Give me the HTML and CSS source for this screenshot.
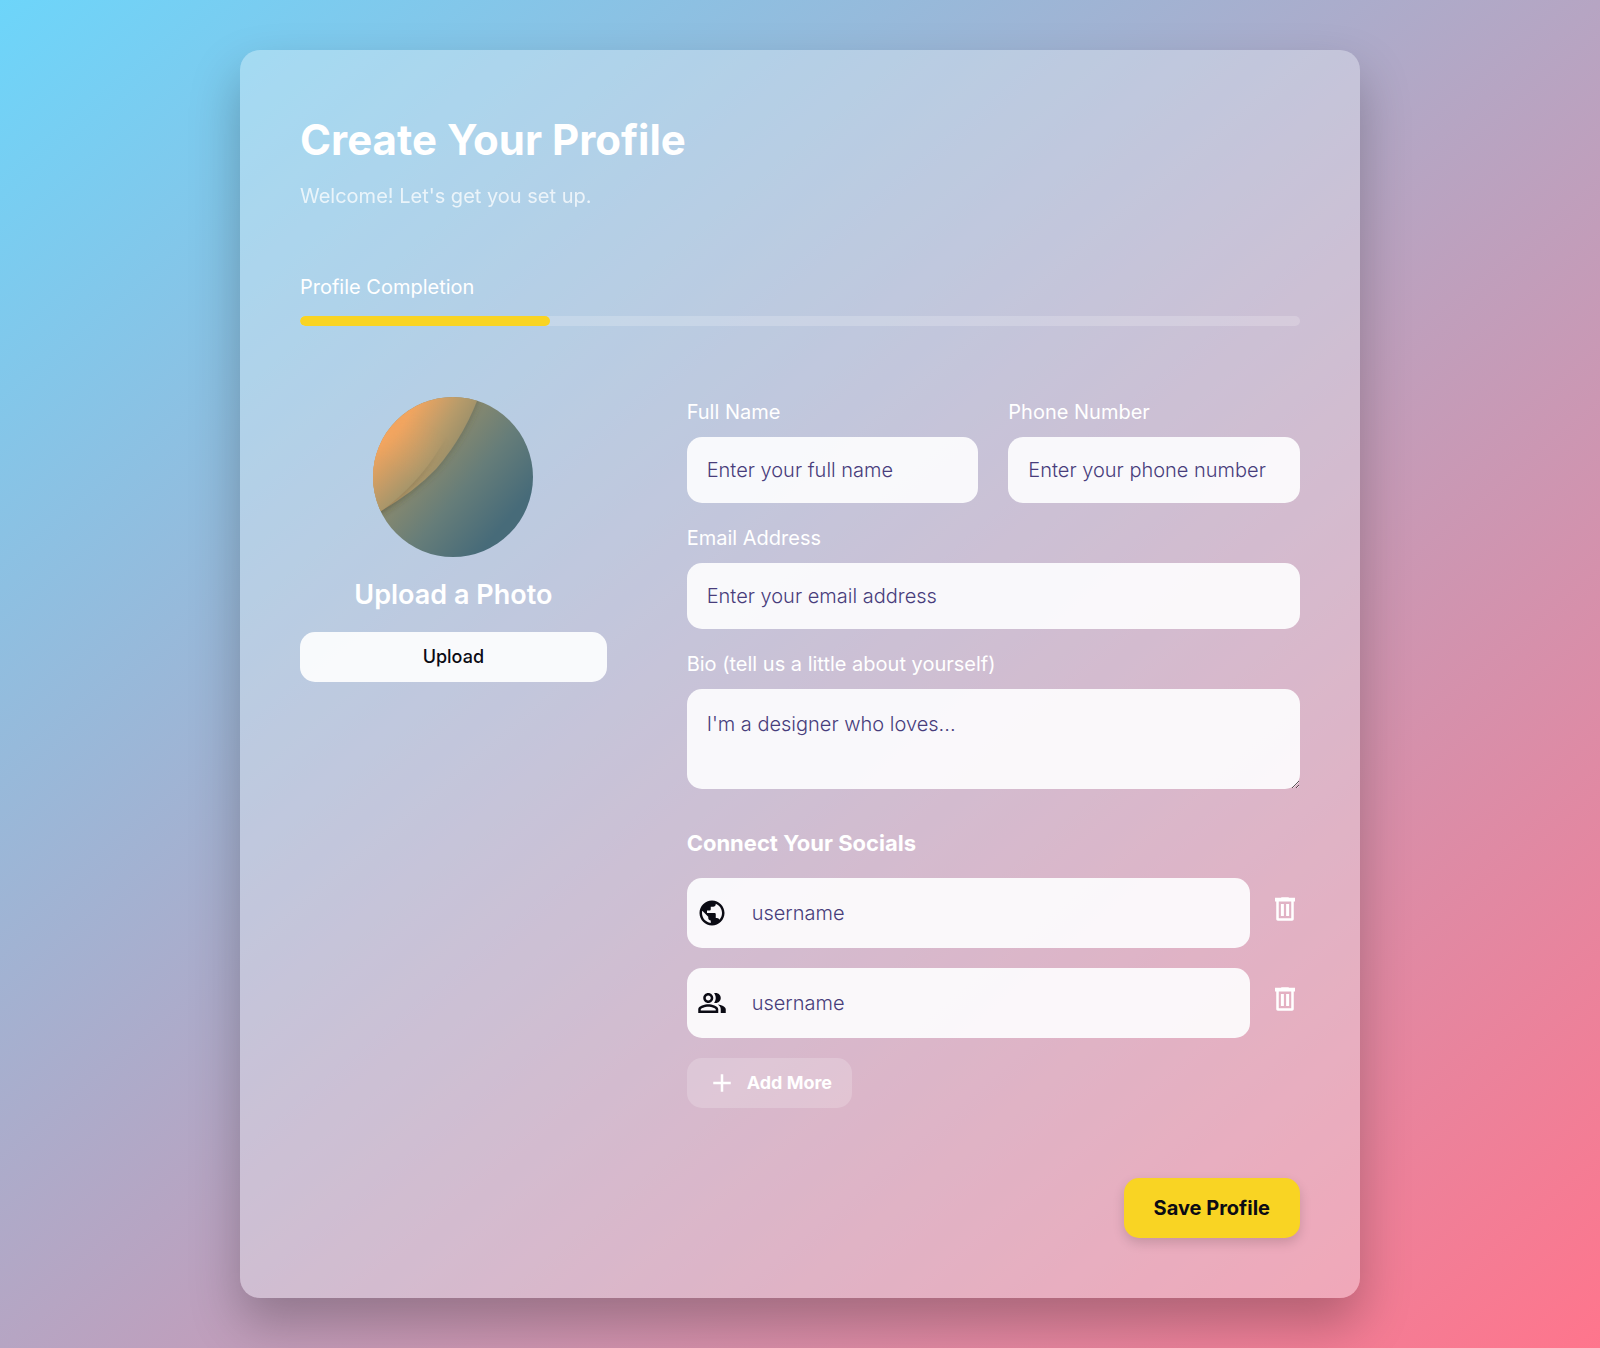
FILE: index.html
```html
<!DOCTYPE html>
<html lang="en">
<head>
<meta charset="utf-8">
<meta name="viewport" content="width=device-width, initial-scale=1">
<title>Create Your Profile</title>
<link rel="stylesheet" href="styles.css">
</head>
<body>
<main class="card">
  <header class="card-header">
    <h1 class="title">Create Your Profile</h1>
    <p class="subtitle">Welcome! Let's get you set up.</p>
  </header>

  <section class="completion">
    <span class="label" id="completion-label">Profile Completion</span>
    <div class="progress" role="progressbar" aria-labelledby="completion-label" aria-valuenow="25" aria-valuemin="0" aria-valuemax="100">
      <div class="progress-fill" style="width: 25%"></div>
    </div>
  </section>

  <form class="profile-form">
    <div class="columns">
      <section class="photo">
        <svg class="avatar" viewBox="0 0 160 160" aria-hidden="true">
          <defs>
            <linearGradient id="base" gradientUnits="userSpaceOnUse" x1="48" y1="58" x2="130" y2="128">
              <stop offset="0" stop-color="#8d8b6d"/>
              <stop offset=".5" stop-color="#667d79"/>
              <stop offset="1" stop-color="#476b79"/>
            </linearGradient>
            <linearGradient id="upper" gradientUnits="userSpaceOnUse" x1="32" y1="24" x2="82" y2="56">
              <stop offset="0" stop-color="#f0a561"/>
              <stop offset=".6" stop-color="#b79b6a"/>
              <stop offset="1" stop-color="#998f6b"/>
            </linearGradient>
            <linearGradient id="lower" gradientUnits="userSpaceOnUse" x1="18" y1="36" x2="55" y2="76">
              <stop offset="0" stop-color="#f4a55f"/>
              <stop offset="1" stop-color="#a3956b"/>
            </linearGradient>
            <linearGradient id="fade" gradientUnits="userSpaceOnUse" x1="40" y1="86" x2="76" y2="42">
              <stop offset="0" stop-color="#fff"/>
              <stop offset="1" stop-color="#fff" stop-opacity="0"/>
            </linearGradient>
            <mask id="lower-mask"><rect x="-20" y="-20" width="200" height="200" fill="url(#fade)"/></mask>
            <filter id="crease" x="-20%" y="-20%" width="140%" height="140%">
              <feDropShadow dx="1" dy="1" stdDeviation="3" flood-color="#4b4a35" flood-opacity=".35"/>
            </filter>
            <clipPath id="round"><circle cx="80" cy="80" r="80"/></clipPath>
          </defs>
          <g clip-path="url(#round)">
            <rect width="160" height="160" fill="url(#base)"/>
            <path d="M-10-10H109Q94 36 63 72Q42 94 8 114L-10 124Z" fill="url(#upper)" filter="url(#crease)"/>
            <g mask="url(#lower-mask)">
              <path d="M-10-10H96Q84 26 66 52Q44 88 8 114L-10 126Z" fill="url(#lower)" filter="url(#crease)"/>
            </g>
          </g>
        </svg>
        <h2 class="photo-title">Upload a Photo</h2>
        <button class="btn btn-upload" type="button">Upload</button>
      </section>

      <div class="fields">
        <div class="field-row">
          <div class="field">
            <label class="label" for="full-name">Full Name</label>
            <input class="input" id="full-name" type="text" placeholder="Enter your full name">
          </div>
          <div class="field">
            <label class="label" for="phone">Phone Number</label>
            <input class="input" id="phone" type="tel" placeholder="Enter your phone number">
          </div>
        </div>
        <div class="field">
          <label class="label" for="email">Email Address</label>
          <input class="input" id="email" type="email" placeholder="Enter your email address">
        </div>
        <div class="field">
          <label class="label" for="bio">Bio (tell us a little about yourself)</label>
          <textarea class="input textarea" id="bio" placeholder="I'm a designer who loves..."></textarea>
        </div>

        <section class="socials">
          <h3 class="socials-title">Connect Your Socials</h3>
          <div class="social">
            <label class="social-box">
              <svg class="icon" viewBox="0 0 24 24" aria-hidden="true"><path d="M12 2C6.480 2 2 6.480 2 12s4.480 10 10 10 10-4.480 10-10S17.520 2 12 2zm-1 17.930c-3.950-.49-7-3.850-7-7.930 0-.62.080-1.210.210-1.790L9 15v1c0 1.100.9 2 2 2v1.930zm6.900-2.540c-.26-.81-1-1.390-1.900-1.390h-1v-3c0-.55-.45-1-1-1H8v-2h2c.55 0 1-.45 1-1V7h2c1.100 0 2-.9 2-2v-.41c2.930 1.190 5 4.060 5 7.410 0 2.080-.8 3.970-2.100 5.390z"/></svg>
              <input class="social-input" type="text" placeholder="username" aria-label="Website username">
            </label>
            <button class="btn-delete" type="button" aria-label="Remove website">
              <svg class="icon" viewBox="0 0 24 24" aria-hidden="true"><path d="M15 3V2.500H9V3H4v3h1v14c0 1 .5 1.300 1.300 1.300h11.400c.8 0 1.300-.3 1.300-1.300V6h1V3zM7 6h10v13.300H7zM8.700 8h2.400v9.500H8.700zM12.900 8h2.400v9.500h-2.400z" fill-rule="evenodd"/></svg>
            </button>
          </div>
          <div class="social">
            <label class="social-box">
              <svg class="icon" viewBox="0 0 24 24" aria-hidden="true"><path d="M16.670 13.130C18.040 14.060 19 15.320 19 17v3h4v-3c0-2.180-3.570-3.470-6.330-3.870zM15 12c2.210 0 4-1.790 4-4s-1.790-4-4-4c-.47 0-.91.100-1.330.240C14.500 5.270 15 6.580 15 8s-.5 2.730-1.330 3.760c.42.140.86.240 1.330.240zM9 12c2.210 0 4-1.790 4-4s-1.790-4-4-4-4 1.790-4 4 1.790 4 4 4zm0-6c1.100 0 2 .9 2 2s-.9 2-2 2-2-.9-2-2 .9-2 2-2zM9 13c-2.670 0-8 1.340-8 4v3h16v-3c0-2.660-5.330-4-8-4zm6 5H3v-.99C3.200 16.290 6.300 15 9 15s5.800 1.290 6 2v1z"/></svg>
              <input class="social-input" type="text" placeholder="username" aria-label="Community username">
            </label>
            <button class="btn-delete" type="button" aria-label="Remove community">
              <svg class="icon" viewBox="0 0 24 24" aria-hidden="true"><path d="M15 3V2.500H9V3H4v3h1v14c0 1 .5 1.300 1.300 1.300h11.400c.8 0 1.300-.3 1.300-1.300V6h1V3zM7 6h10v13.300H7zM8.700 8h2.400v9.500H8.700zM12.900 8h2.400v9.500h-2.400z" fill-rule="evenodd"/></svg>
            </button>
          </div>
          <button class="btn btn-add" type="button">
            <svg class="icon" viewBox="0 0 24 24" aria-hidden="true"><path d="M19 13h-6v6h-2v-6H5v-2h6V5h2v6h6z"/></svg>
            <span>Add More</span>
          </button>
        </section>
      </div>
    </div>

    <div class="actions">
      <button class="btn btn-save" type="submit">Save Profile</button>
    </div>
  </form>
</main>
</body>
</html>
```

FILE: styles.css
```css
* {
  box-sizing: border-box;
}

body {
  margin: 0;
  min-height: 100vh;
  padding: 50px 20px;
  background: linear-gradient(to bottom right, #6dd5fa, #ff758c);
  color: #fff;
  font-family: Inter, "Liberation Sans", sans-serif;
  font-size: 20px;
  line-height: 30px;
}

h1,
h2,
h3,
p {
  margin: 0;
}

input,
textarea,
button {
  font: inherit;
}

.card {
  max-width: 1120px;
  margin: 0 auto;
  padding: 60px;
  border-radius: 20px;
  background: rgba(240, 245, 248, 0.35);
  box-shadow: 0 25px 50px rgba(0, 0, 0, 0.25);
}

.title {
  font-size: 42px;
  font-weight: 700;
  line-height: 60px;
}

.subtitle {
  margin-top: 11px;
  opacity: 0.75;
}

.completion {
  margin-top: 61px;
}

.completion .label {
  display: block;
}

.progress {
  height: 10px;
  margin-top: 14px;
  overflow: hidden;
  border-radius: 5px;
  background: rgba(255, 255, 255, 0.2);
}

.progress-fill {
  height: 100%;
  border-radius: 5px;
  background: #f9d423;
}

.profile-form {
  margin-top: 71px;
}

.columns {
  display: grid;
  grid-template-columns: minmax(0, 1fr) minmax(0, 2fr);
  gap: 80px;
}

.photo {
  display: flex;
  flex-direction: column;
  align-items: center;
}

.avatar {
  width: 160px;
  height: 160px;
}

.photo-title {
  margin: 20px 0;
  font-size: 27px;
  font-weight: 600;
  line-height: 35px;
}

.btn {
  border: 0;
  border-radius: 15px;
  cursor: pointer;
}

.btn-upload {
  width: 100%;
  height: 50px;
  background: rgba(255, 255, 255, 0.9);
  color: #0b0b14;
  font-size: 18px;
  font-weight: 500;
}

.fields {
  display: flex;
  flex-direction: column;
  gap: 20px;
}

.field-row {
  display: grid;
  grid-template-columns: repeat(2, minmax(0, 1fr));
  gap: 30px;
}

.field {
  display: flex;
  flex-direction: column;
  gap: 10px;
}

.input {
  width: 100%;
  height: 66px;
  padding: 20px;
  border: 0;
  border-radius: 15px;
  background: rgba(253, 253, 254, 0.92);
  color: #0b0b14;
  font-weight: 300;
}

.textarea {
  display: block;
  height: 100px;
  resize: vertical;
}

::placeholder {
  color: #483d7b;
  opacity: 1;
}

.socials {
  display: flex;
  flex-direction: column;
  gap: 20px;
  margin-top: 19px;
}

.socials-title {
  font-size: 22px;
  font-weight: 700;
}

.social {
  display: flex;
  align-items: center;
  gap: 20px;
}

.social-box {
  display: flex;
  flex: 1;
  align-items: center;
  gap: 25px;
  height: 70px;
  padding: 0 10px;
  border-radius: 15px;
  background: rgba(253, 253, 254, 0.92);
  color: #0b0b14;
}

.social-input {
  flex: 1;
  min-width: 0;
  padding: 0;
  border: 0;
  background: none;
  font-weight: 300;
}

.icon {
  display: block;
  flex: none;
  width: 30px;
  height: 30px;
  fill: currentColor;
}

.btn-delete {
  padding: 0 0 8px;
  border: 0;
  background: none;
  color: #fff;
  cursor: pointer;
}

.btn-add {
  display: flex;
  align-self: flex-start;
  align-items: center;
  gap: 10px;
  height: 50px;
  padding: 0 20px;
  background: rgba(255, 255, 255, 0.2);
  color: #fff;
  font-size: 18px;
  font-weight: 700;
}

.actions {
  display: flex;
  justify-content: flex-end;
  margin-top: 70px;
}

.btn-save {
  height: 60px;
  padding: 0 30px;
  background: #f9d423;
  box-shadow: 0 5px 12px rgba(0, 0, 0, 0.15);
  color: #0b0b14;
  font-weight: 700;
}
```
